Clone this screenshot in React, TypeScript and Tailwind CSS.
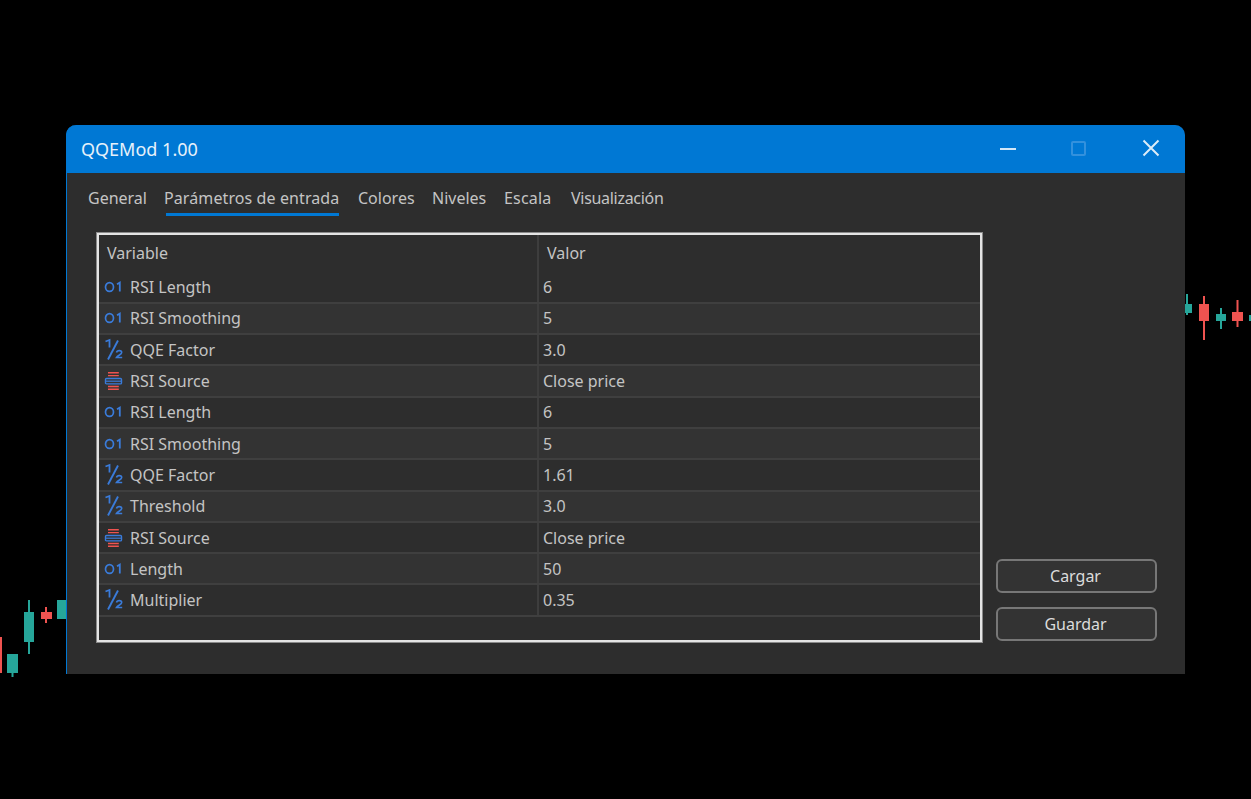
const blue = "#3a7bd9";
const red = "#ef5350";

const IntIcon = () => (
  <svg width="20" height="14" viewBox="0 0 20 14" fill="none" className="shrink-0">
    <ellipse cx="5.5" cy="7" rx="4" ry="4.4" stroke={blue} strokeWidth="1.7" />
    <path d="M13 4.2 L15.8 2.6 V11.4" stroke={blue} strokeWidth="1.8" />
  </svg>
);

const FloatIcon = () => (
  <svg width="20" height="24" viewBox="0 0 20 24" fill="none" className="shrink-0">
    <path d="M1.5 3.5 L5.5 2 V9.5" stroke={blue} strokeWidth="1.8" />
    <path d="M4 21.5 L14 2.5" stroke={blue} strokeWidth="1.9" />
    <path d="M12.5 14.5 C13 12 17.7 12 17.7 14.5 C17.7 16.5 13.7 17.5 12.5 19.5 H18.2" stroke={blue} strokeWidth="1.6" />
  </svg>
);

const EnumIcon = () => (
  <svg width="20" height="20" viewBox="0 0 20 20" fill="none" className="shrink-0">
    <path d="M4 1.8 H14.8 M4 4.6 H14.8" stroke={red} strokeWidth="1.4" />
    <rect x="1.5" y="7.5" width="16" height="5.4" rx="1" stroke={blue} strokeWidth="1.4" />
    <path d="M1 10.2 H18" stroke={blue} strokeWidth="1.2" />
    <path d="M4 15.5 H14.8 M4 18.3 H14.8" stroke={red} strokeWidth="1.4" />
  </svg>
);

type Row = { icon: "int" | "float" | "enum"; name: string; value: string };

const rows: Row[] = [
  { icon: "int", name: "RSI Length", value: "6" },
  { icon: "int", name: "RSI Smoothing", value: "5" },
  { icon: "float", name: "QQE Factor", value: "3.0" },
  { icon: "enum", name: "RSI Source", value: "Close price" },
  { icon: "int", name: "RSI Length", value: "6" },
  { icon: "int", name: "RSI Smoothing", value: "5" },
  { icon: "float", name: "QQE Factor", value: "1.61" },
  { icon: "float", name: "Threshold", value: "3.0" },
  { icon: "enum", name: "RSI Source", value: "Close price" },
  { icon: "int", name: "Length", value: "50" },
  { icon: "float", name: "Multiplier", value: "0.35" },
];

const tabs = [
  { label: "General", cls: "w-[58px]" },
  { label: "Parámetros de entrada", cls: "w-[176px] tracking-[0.1px]" },
  { label: "Colores", cls: "w-[56px]" },
  { label: "Niveles", cls: "w-[54px]" },
  { label: "Escala", cls: "w-[49px] tracking-[0.2px]" },
  { label: "Visualización", cls: "w-[93px] tracking-[-0.3px]" },
];

// body x, y, w, h, wick x, wick top, wick bottom
const candles: [string, number, number, number, number, number, number, number][] = [
  ["#ef5350", 0, 637, 2, 36, 0, 637, 673],
  ["#26a69a", 7, 654, 11, 19, 12.5, 654, 677],
  ["#26a69a", 24, 612, 10, 30, 29, 600, 654],
  ["#ef5350", 41, 612, 11, 7, 46, 607, 623],
  ["#26a69a", 57, 600, 10, 19, 62, 600, 619],
  ["#26a69a", 1185, 304, 7, 9, 1187, 294, 315],
  ["#ef5350", 1199, 304, 10, 17, 1204, 296, 340],
  ["#26a69a", 1216, 314, 10, 7, 1221, 308, 329],
  ["#ef5350", 1232, 312, 11, 9, 1237.5, 300, 327],
  ["#26a69a", 1249, 315, 2, 6, 1250, 315, 321],
];

const App = () => {
  return (
    <div className="relative w-[1251px] h-[799px] overflow-hidden bg-black pt-[125px] pl-[66px] font-['Noto_Sans',sans-serif] text-[16px] text-[#c4c4c4]">
      <svg width="1251" height="799" className="absolute left-0 top-0">
        {candles.map(([c, x, y, w, h, wx, wt, wb], i) => (
          <g key={i} fill={c}>
            <rect x={wx - 1} y={wt} width="2" height={wb - wt} />
            <rect x={x} y={y} width={w} height={h} />
          </g>
        ))}
      </svg>

      <div className="relative flex flex-col w-[1119px] h-[549px] bg-[#2d2d2d] rounded-t-[10px] border-l border-[#0078d4]">
        <div className="flex items-center justify-between h-[48px] shrink-0 bg-[#0078d4] rounded-t-[10px] -ml-px pl-[15px] pr-[25px]">
          <span className="text-[18px] text-[#e6f1fa]">QQEMod 1.00</span>
          <div className="flex items-center -mt-[2px]">
            <div className="w-[16px] h-[2px] mt-[2px] bg-[#d3e7f7]" />
            <div className="w-[15px] h-[15px] ml-[55px] border-2 border-[#3391dd] rounded-[2px]" />
            <svg width="18" height="18" viewBox="0 0 18 18" className="ml-[56px]" fill="none">
              <path d="M1.5 1.5 L16.5 16.5 M16.5 1.5 L1.5 16.5" stroke="#dcecf8" strokeWidth="2" />
            </svg>
          </div>
        </div>

        <div className="flex gap-[18px] h-[42px] shrink-0 pl-[21px] pt-[11px]">
          {tabs.map((t, i) => (
            <div key={t.label} className={`relative h-[28px] leading-[28px] whitespace-nowrap ${t.cls}`}>
              {t.label}
              {i === 1 && <div className="absolute left-[2px] right-[1px] top-[29px] h-[3px] bg-[#0078d4]" />}
            </div>
          ))}
        </div>

        <div className="flex pl-[29px] pt-[17px]">
          <div className="flex flex-col w-[887px] h-[411px] border-[3px] border-[#e4e4e4] outline outline-1 -outline-offset-[1px] outline-[#8a8a8a]">
            <div className="flex h-[37.5px] shrink-0 items-center pb-[2px]">
              <div className="w-[440px] h-[37.5px] -mb-[2px] pb-[2px] pl-[8px] flex items-center border-r-2 border-[#3d3d3d]">Variable</div>
              <div className="pl-[8px]">Valor</div>
            </div>
            {rows.map((r, i) => (
              <div
                key={i}
                className={`flex h-[31.3px] shrink-0 items-center border-b-2 border-[#3f3f3f] ${i % 2 === 1 ? "bg-[#333333]" : "bg-[#2d2d2d]"}`}
              >
                <div className="flex items-center w-[440px] h-full border-r-2 border-[#3d3d3d] pl-[5px]">
                  <div className="flex w-[26px] shrink-0 items-center">
                    {r.icon === "int" && <IntIcon />}
                    {r.icon === "float" && <FloatIcon />}
                    {r.icon === "enum" && <EnumIcon />}
                  </div>
                  <span>{r.name}</span>
                </div>
                <div className="pl-[4px]">{r.value}</div>
              </div>
            ))}
          </div>

          <div className="flex flex-col gap-[14px] ml-[13px] pt-[327px]">
            <button className="w-[161px] h-[34px] pr-[2px] rounded-[6px] border-2 border-[#777777] bg-[#333333] text-[#dcdcdc]">Cargar</button>
            <button className="w-[161px] h-[34px] pr-[2px] rounded-[6px] border-2 border-[#777777] bg-[#333333] text-[#dcdcdc]">Guardar</button>
          </div>
        </div>
      </div>
    </div>
  );
};

export default App;
